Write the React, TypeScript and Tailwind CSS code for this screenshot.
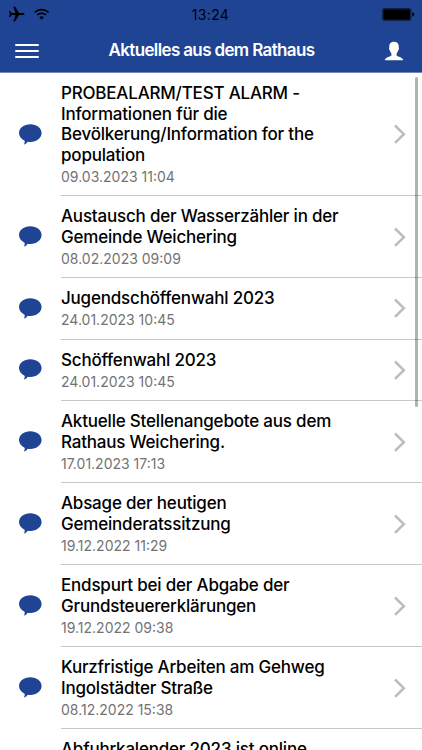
import { Fragment } from "react";

const news = [
  {
    lines: [
      "PROBEALARM/TEST ALARM -",
      "Informationen für die",
      "Bevölkerung/Information for the",
      "population",
    ],
    date: "09.03.2023 11:04",
  },
  {
    lines: ["Austausch der Wasserzähler in der", "Gemeinde Weichering"],
    date: "08.02.2023 09:09",
  },
  { lines: ["Jugendschöffenwahl 2023"], date: "24.01.2023 10:45" },
  { lines: ["Schöffenwahl 2023"], date: "24.01.2023 10:45" },
  {
    lines: ["Aktuelle Stellenangebote aus dem", "Rathaus Weichering."],
    date: "17.01.2023 17:13",
  },
  {
    lines: ["Absage der heutigen", "Gemeinderatssitzung"],
    date: "19.12.2022 11:29",
  },
  {
    lines: ["Endspurt bei der Abgabe der", "Grundsteuererklärungen"],
    date: "19.12.2022 09:38",
  },
  {
    lines: ["Kurzfristige Arbeiten am Gehweg", "Ingolstädter Straße"],
    date: "08.12.2022 15:38",
  },
  { lines: ["Abfuhrkalender 2023 ist online", ""], date: "" },
];

function StatusBar() {
  return (
    <div className="grid h-7 grid-cols-3 items-center pl-2 pr-[7px] text-black">
      <div className="flex items-center gap-[9px]">
        <svg width="17" height="16" viewBox="0 0 17 16" fill="currentColor">
          <path d="M16.6 8c0-.7-.8-1.1-1.8-1.1h-3.6L6.9.6H5.4l2 6.300H3.700L2.100 5H1l.8 3L1 11h1.100l1.600-1.900h3.700l-2 6.300h1.500l4.300-6.300h3.600c1 0 1.800-.4 1.800-1.100z" />
        </svg>
        <svg
          width="16"
          height="12"
          viewBox="0 0 16 12"
          fill="none"
          stroke="currentColor"
          strokeWidth="1.6"
        >
          <path d="M.7 4.300a10.300 10.300 0 0 1 13.800 0M3.200 7a6.400 6.400 0 0 1 8.800 0" />
          <path d="M7.600 11.700 5.300 9.300a3.300 3.300 0 0 1 4.600 0z" fill="currentColor" stroke="none" />
        </svg>
      </div>
      <span className="-ml-0.5 text-center text-[14px] tracking-[0.35px]">13:24</span>
      <div className="flex justify-end">
        <svg width="33" height="13" viewBox="0 0 33 13">
          <rect x=".5" y=".5" width="28.5" height="12" rx="1.5" fill="none" stroke="currentColor" strokeOpacity=".5" />
          <rect x="1.3" y="1.3" width="27" height="10.4" rx="1" fill="currentColor" />
          <path d="M30.3 4.5c1.2.1 2 .9 2 2s-.8 1.9-2 2z" fill="currentColor" />
        </svg>
      </div>
    </div>
  );
}

function Header() {
  return (
    <header className="h-[73px] shrink-0 border-b border-[#6f87b8] bg-[#1f4494]">
      <StatusBar />
      <div className="flex h-[45px] items-center justify-between pl-[15px] pr-[18px] text-white">
        <button className="flex w-6 flex-col gap-1" aria-label="Menü">
          <span className="h-0.5 w-6 rounded-full bg-white" />
          <span className="h-0.5 w-6 rounded-full bg-white" />
          <span className="h-0.5 w-6 rounded-full bg-white" />
        </button>
        <h1 className="text-[17px] font-semibold tracking-[-0.64px]">
          Aktuelles aus dem Rathaus
        </h1>
        <button aria-label="Profil">
          <svg width="20" height="20" viewBox="0 0 20 20" fill="currentColor">
            <path d="M10 .7c3 0 4.8 1.9 4.800 4.900 0 .5-.1.9-.1 1.200.5.3.4 1.700-.4 2.400-.3 1.300-.9 2.500-1.700 3.300v2c.4 1 6.600 1.700 6.600 4.800H.8c0-3.100 6.200-3.800 6.600-4.800v-2c-.8-.8-1.400-2-1.700-3.300-.8-.7-.9-2.100-.4-2.400 0-.3-.1-.7-.1-1.200C5.200 2.600 7 .7 10 .7z" />
          </svg>
        </button>
      </div>
    </header>
  );
}

function NewsRow({ lines, date }: { lines: string[]; date: string }) {
  return (
    <li className="flex pl-[19px]">
      <div className="flex w-[42px] shrink-0 items-center pb-px">
        <svg width="23" height="21" viewBox="0 0 23 21" fill="#1f4494">
          <path d="M11.300.3C17.600.3 22.600 4.200 22.600 9.100s-5 9-11.300 9c-1 0-1.800-.1-2.600-.3-1 1.600-2.400 2.500-3.900 2.700.8-1 1.100-2.500.8-3.800C2.200 15.200 0 12.400 0 9.100 0 4.200 5 .3 11.300.3z" />
        </svg>
      </div>
      <div className="flex flex-1 items-center justify-between border-b border-[#c8c8cb] pb-[9.3px] pr-4 pt-[10.05px]">
        <div>
          <h2 className="whitespace-nowrap text-[17px] font-medium leading-[20.6px] tracking-[-0.2px] text-black">
            {lines.map((line) => (
              <Fragment key={line}>
                <span>{line}</span>
                <br />
              </Fragment>
            ))}
          </h2>
          <p className="mt-[2.5px] text-[14px] leading-[18px] text-[#737373]">{date}</p>
        </div>
        <svg
          className="mb-px"
          width="13"
          height="20"
          viewBox="0 0 13 20"
          fill="none"
          stroke="#bdbdbd"
          strokeWidth="2.6"
        >
          <path d="M2 1.500l8.800 8.700L2 18.900" />
        </svg>
      </div>
    </li>
  );
}

export default function App() {
  return (
    <div className="relative flex h-[750px] w-[422px] flex-col overflow-hidden bg-white font-['Inter',sans-serif]">
      <Header />
      <ul className="flex-1 overflow-hidden">
        {news.map((item) => (
          <NewsRow key={item.lines[0]} {...item} />
        ))}
      </ul>
      {/* Scroll indicator */}
      <div className="absolute right-1 top-[77px] h-[330px] w-[3px] rounded-full bg-black/30" />
    </div>
  );
}
